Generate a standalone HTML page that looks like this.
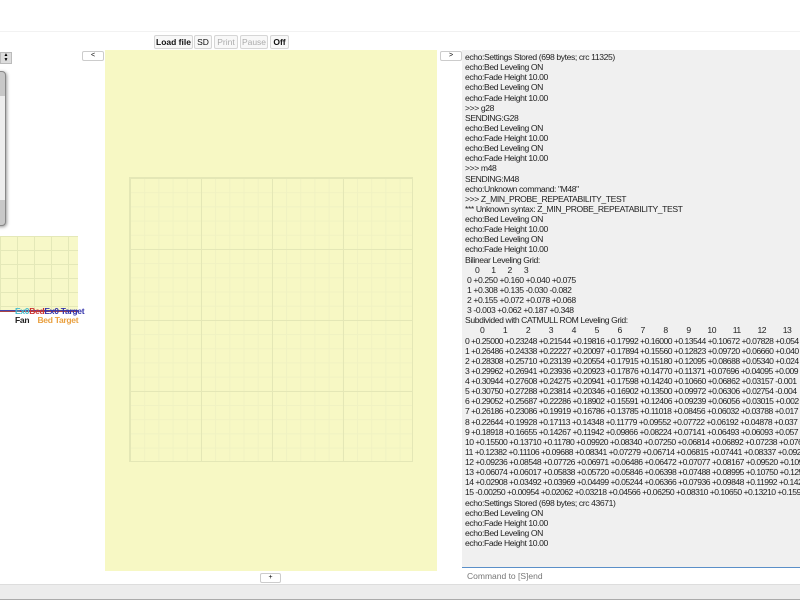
<!DOCTYPE html>
<html><head><meta charset="utf-8"><style>
*{margin:0;padding:0;box-sizing:border-box}
body{width:800px;height:600px;overflow:hidden;background:#fff;font-family:"Liberation Sans",sans-serif;position:relative}
.a{position:absolute}
.btn{position:absolute;top:35px;height:14px;border:1px solid #d6d6d6;border-radius:2px;background:#f8f8f8;font-size:8.5px;line-height:12px;text-align:center;color:#111}
.dis{color:#aaa}
#con{left:462px;top:50px;width:338px;height:520px;background:#f0f0f0;font-size:8.6px;line-height:10.13px;color:#222;white-space:pre;overflow:hidden;padding:2px 0 0 3px;letter-spacing:-0.4px}
.g{letter-spacing:-0.52px}
</style></head><body>
<div class="a" style="left:0;top:0;width:800px;height:32px;background:#fff;border-bottom:1px solid #f2f2f2"></div>
<div class="btn" style="left:154px;width:39px;font-weight:bold">Load file</div>
<div class="btn" style="left:194px;width:18px">SD</div>
<div class="btn dis" style="left:214px;width:24px">Print</div>
<div class="btn dis" style="left:240px;width:28px">Pause</div>
<div class="btn" style="left:270px;width:19px;font-weight:bold">Off</div>
<div class="a" style="left:0;top:52px;width:12px;height:12px;background:#ddd;border:1px solid #bbb;font-size:5px;line-height:5px;text-align:center">▲<br>▼</div>
<div class="a" style="left:82px;top:51px;width:22px;height:10px;border:1px solid #ccc;border-radius:2px;font-size:7px;line-height:8px;text-align:center">&lt;</div>
<div class="a" style="left:-10px;top:71px;width:16px;height:155px;background:#c8c8c8;border:1px solid #888;border-radius:4px;box-shadow:1px 1px 3px #999"></div>
<div class="a" style="left:0;top:96px;width:5px;height:104px;background:#eee"></div>
<div class="a" style="left:0;top:236px;width:78px;height:74px;background:#f7f8c8;background-image:linear-gradient(#e4e8b8 1px,transparent 1px),linear-gradient(90deg,#e4e8b8 1px,transparent 1px);background-size:17px 14px"></div>
<div class="a" style="left:0;top:310px;width:78px;height:2px;border-top:1px solid #44a;border-bottom:1px solid #a44"></div>
<div class="a" style="left:15px;top:306px;font-size:8.5px;font-weight:bold;white-space:nowrap;letter-spacing:-0.3px"><span style="color:#4bc">Ex0</span><span style="color:#c33">Bed</span><span style="color:#33a">Ex0 Target</span></div>
<div class="a" style="left:15px;top:315px;font-size:8.5px;font-weight:bold;white-space:nowrap;letter-spacing:-0.3px"><span style="color:#222">Fan</span> &nbsp;&nbsp; <span style="color:#e9a040">Bed Target</span></div>
<div class="a" style="left:105px;top:50px;width:332px;height:521px;background:#f7f8c4"></div>
<div class="a" style="left:129px;top:177px;width:284px;height:285px;border:1px solid #e4e7b6;background-image:linear-gradient(#e4e7b6 1px,transparent 1px),linear-gradient(90deg,#e4e7b6 1px,transparent 1px),linear-gradient(#f0f2c2 1px,transparent 1px),linear-gradient(90deg,#f0f2c2 1px,transparent 1px);background-size:71px 71px,71px 71px,14.2px 14.2px,14.2px 14.2px"></div>
<div class="a" style="left:260px;top:573px;width:21px;height:10px;border:1px solid #ccc;border-radius:2px;font-size:7px;line-height:8px;text-align:center">+</div>
<div class="a" style="left:440px;top:51px;width:22px;height:10px;border:1px solid #ccc;border-radius:2px;font-size:7px;line-height:8px;text-align:center">&gt;</div>
<div class="a" id="con">echo:Settings Stored (698 bytes; crc 11325)
echo:Bed Leveling ON
echo:Fade Height 10.00
echo:Bed Leveling ON
echo:Fade Height 10.00
&gt;&gt;&gt; g28
SENDING:G28
echo:Bed Leveling ON
echo:Fade Height 10.00
echo:Bed Leveling ON
echo:Fade Height 10.00
&gt;&gt;&gt; m48
SENDING:M48
echo:Unknown command: "M48"
&gt;&gt;&gt; Z_MIN_PROBE_REPEATABILITY_TEST
*** Unknown syntax: Z_MIN_PROBE_REPEATABILITY_TEST
echo:Bed Leveling ON
echo:Fade Height 10.00
echo:Bed Leveling ON
echo:Fade Height 10.00
Bilinear Leveling Grid:
     0      1      2      3
 0 +0.250 +0.160 +0.040 +0.075
 1 +0.308 +0.135 -0.030 -0.082
 2 +0.155 +0.072 +0.078 +0.068
 3 -0.003 +0.062 +0.187 +0.348
Subdivided with CATMULL ROM Leveling Grid:
<span class="g">        0          1          2          3          4          5          6          7          8          9         10         11         12         13        14        15
0 +0.25000 +0.23248 +0.21544 +0.19816 +0.17992 +0.16000 +0.13544 +0.10672 +0.07828 +0.054
1 +0.26486 +0.24338 +0.22227 +0.20097 +0.17894 +0.15560 +0.12823 +0.09720 +0.06660 +0.040
2 +0.28308 +0.25710 +0.23139 +0.20554 +0.17915 +0.15180 +0.12095 +0.08688 +0.05340 +0.024
3 +0.29962 +0.26941 +0.23936 +0.20923 +0.17876 +0.14770 +0.11371 +0.07696 +0.04095 +0.009
4 +0.30944 +0.27608 +0.24275 +0.20941 +0.17598 +0.14240 +0.10660 +0.06862 +0.03157 -0.001
5 +0.30750 +0.27288 +0.23814 +0.20346 +0.16902 +0.13500 +0.09972 +0.06306 +0.02754 -0.004
6 +0.29052 +0.25687 +0.22286 +0.18902 +0.15591 +0.12406 +0.09239 +0.06056 +0.03015 +0.002
7 +0.26186 +0.23086 +0.19919 +0.16786 +0.13785 +0.11018 +0.08456 +0.06032 +0.03788 +0.017
8 +0.22644 +0.19928 +0.17113 +0.14348 +0.11779 +0.09552 +0.07722 +0.06192 +0.04878 +0.037
9 +0.18918 +0.16655 +0.14267 +0.11942 +0.09866 +0.08224 +0.07141 +0.06493 +0.06093 +0.057
10 +0.15500 +0.13710 +0.11780 +0.09920 +0.08340 +0.07250 +0.06814 +0.06892 +0.07238 +0.076
11 +0.12382 +0.11106 +0.09688 +0.08341 +0.07279 +0.06714 +0.06815 +0.07441 +0.08337 +0.092
12 +0.09236 +0.08548 +0.07726 +0.06971 +0.06486 +0.06472 +0.07077 +0.08167 +0.09520 +0.109
13 +0.06074 +0.06017 +0.05838 +0.05720 +0.05846 +0.06398 +0.07488 +0.08995 +0.10750 +0.125
14 +0.02908 +0.03492 +0.03969 +0.04499 +0.05244 +0.06366 +0.07936 +0.09848 +0.11992 +0.142
15 -0.00250 +0.00954 +0.02062 +0.03218 +0.04566 +0.06250 +0.08310 +0.10650 +0.13210 +0.159</span>
echo:Settings Stored (698 bytes; crc 43671)
echo:Bed Leveling ON
echo:Fade Height 10.00
echo:Bed Leveling ON
echo:Fade Height 10.00</div>
<div class="a" style="left:462px;top:567px;width:338px;height:17px;background:#fff;border-top:1px solid #5a8fc8;font-size:8.5px;line-height:16px;color:#777;padding-left:5px">Command to [S]end</div>
<div class="a" style="left:0;top:584px;width:800px;height:16px;background:#ececec;border-top:1px solid #ddd;border-bottom:1px solid #aaa"></div>
</body></html>
